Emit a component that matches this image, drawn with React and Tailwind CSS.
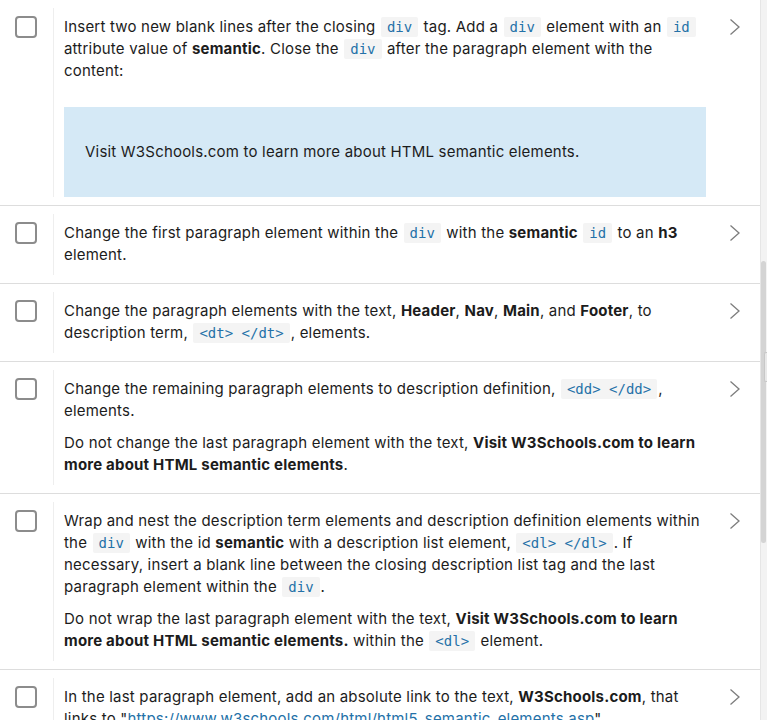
const Code = ({ children }) => (
  <code className="mx-[1px] rounded-[2px] bg-[#f4f4f4] px-[6px] py-[2px] font-['DejaVu_Sans_Mono',monospace] text-[14px] leading-[18px] tracking-normal text-[#2471a8]">
    {children}
  </code>
);

const B = ({ children }) => <strong className="font-bold">{children}</strong>;

const Chevron = () => (
  <svg width="12" height="18" viewBox="0 0 12 18" fill="none" className="text-[#7d7d7d]">
    <path d="M1.5 1.5 L10 9 L1.5 16.5" stroke="currentColor" strokeWidth="1.3" />
  </svg>
);

const steps = [
  {
    body: (
      <>
        <p>
          Insert two new blank lines after the closing <Code>div</Code> tag. Add a <Code>div</Code> element with an{" "}
          <Code>id</Code> attribute value of <B>semantic</B>. Close the <Code>div</Code> after the paragraph element
          with the content:
        </p>
        <div className="mt-[25px] flex h-[90px] items-center bg-[#d5e9f6] pl-[21px]">
          Visit W3Schools.com to learn more about HTML semantic elements.
        </div>
      </>
    ),
    tight: true,
  },
  {
    body: (
      <p>
        Change the first paragraph element within the <Code>div</Code> with the <B>semantic</B> <Code>id</Code> to an{" "}
        <B>h3</B> element.
      </p>
    ),
  },
  {
    body: (
      <p>
        Change the paragraph elements with the text, <B>Header</B>, <B>Nav</B>, <B>Main</B>, and <B>Footer</B>, to
        description term, <Code>&lt;dt&gt; &lt;/dt&gt;</Code>, elements.
      </p>
    ),
  },
  {
    body: (
      <>
        <p>
          Change the remaining paragraph elements to description definition, <Code>&lt;dd&gt; &lt;/dd&gt;</Code>,
          elements.
        </p>
        <p className="mt-[10px]">
          Do not change the last paragraph element with the text,{" "}
          <B>Visit W3Schools.com to learn more about HTML semantic elements</B>.
        </p>
      </>
    ),
  },
  {
    body: (
      <>
        <p>
          Wrap and nest the description term elements and description definition elements within the{" "}
          <Code>div</Code> with the id <B>semantic</B> with a description list element,{" "}
          <Code>&lt;dl&gt; &lt;/dl&gt;</Code>. If necessary, insert a blank line between the closing description list
          tag and the last paragraph element within the <Code>div</Code>.
        </p>
        <p className="mt-[10px]">
          Do not wrap the last paragraph element with the text,{" "}
          <B>Visit W3Schools.com to learn more about HTML semantic elements.</B> within the <Code>&lt;dl&gt;</Code>{" "}
          element.
        </p>
      </>
    ),
  },
  {
    body: (
      <p>
        In the last paragraph element, add an absolute link to the text, <B>W3Schools.com</B>, that links to "
        <span className="text-[#2471a8]">https://www.w3schools.com/html/html5_semantic_elements.asp</span>".
      </p>
    ),
  },
];

function Step({ body, tight }) {
  return (
    <div className="flex border-b border-[#dddddd] py-2">
      <div className="w-[53px] shrink-0 pt-2 pl-[15px]">
        <div className="h-[22px] w-[22px] rounded-[4px] border-2 border-[#8c8c8c] bg-white" />
      </div>
      <div className="border-l border-[#eeeeee]" />
      <div className={`w-[652px] shrink-0 pt-2 pl-[10px] ${tight ? "pb-0" : "pb-[9px]"}`}>{body}</div>
      <div className="flex-1 pt-[10px] pl-[23px]">
        <Chevron />
      </div>
    </div>
  );
}

export default function App() {
  return (
    <div className="relative flex h-[720px] w-[767px] overflow-hidden bg-white font-['Inter',sans-serif] text-[15px] leading-[22px] tracking-[0.2px] text-[#1c1c1c]">
      <div className="w-[760px] shrink-0">
        {steps.map((s, i) => (
          <Step key={i} {...s} />
        ))}
      </div>
      <div className="relative w-[7px] shrink-0 border-l border-[#e6e6e6] bg-[#f3f3f3]">
        <div className="absolute top-[261px] left-0 h-[282px] w-[5px] rounded-full bg-[#d4d4d4]" />
      </div>
      <div className="absolute top-[352px] right-0 h-[30px] w-[3px] rounded-l-[2px] border border-r-0 border-[#c8c8c8] bg-[#e9e9e9]" />
    </div>
  );
}
